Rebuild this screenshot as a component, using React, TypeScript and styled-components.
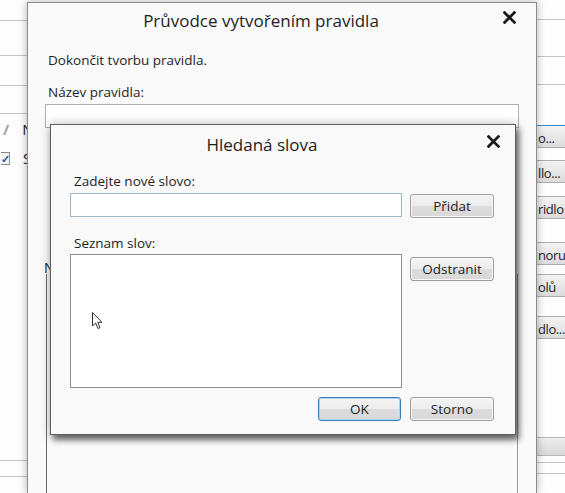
import styled, { createGlobalStyle } from "styled-components";

const Global = createGlobalStyle`
  html, body {
    margin: 0;
    padding: 0;
    background: #fdfdfd;
    overflow: hidden;
  }
  * { box-sizing: border-box; }
`;

const font = `"Open Sans", "Noto Sans", "Liberation Sans", sans-serif`;

const CloseIcon = ({ size }: { size: number }) => (
  <svg width={size} height={size} viewBox="0 0 12 12">
    <path d="M1.5 1.5 L10.5 10.5 M10.5 1.5 L1.5 10.5" stroke="#1a1a1a" strokeWidth="2.6" strokeLinecap="square" />
  </svg>
);

const Pointer = () => (
  <svg width="12" height="18" viewBox="0 0 12 18">
    <path d="M0.5 0.5 L0.5 14 L3.6 11 L6 16.5 L8 15.6 L5.7 10.3 L10 10.3 Z" fill="#fff" stroke="#333" strokeWidth="1" strokeLinejoin="round" />
  </svg>
);

const App = () => {
  return (
    <Page>
      <Global />
      <LeftStrip>
        <StripRow h={20} />
        <StripRow h={34} />
        <StripRow h={29} />
        <StripRow h={27} />
        <ToolRow h={30}>
          <Pen>/</Pen>
          <ToolText>N</ToolText>
        </ToolRow>
        <ToolRow h={28}>
          <Check>✓</Check>
          <ToolText>S</ToolText>
        </ToolRow>
        <StripRow h={288} />
        <StripRow h={15} />
      </LeftStrip>

      <OuterWindow>
        <TitleBar h={34}>
          <Title size={17}>Průvodce vytvořením pravidla</Title>
          <Close right={20} top={8}>
            <CloseIcon size={13} />
          </Close>
        </TitleBar>
        <OuterBody>
          <Label>Dokončit tvorbu pravidla.</Label>
          <Label top={16}>Název pravidla:</Label>
          <NameInput />
          <GroupBox>
            <GroupLabel>N</GroupLabel>
          </GroupBox>
        </OuterBody>
      </OuterWindow>

      <RightStrip>
        <StripRow h={19} />
        <StripRow h={36} />
        <StripRow h={27} />
        <Spacer h={40} />
        <SideButton top={0} active>o...</SideButton>
        <SideButton top={12}>llo...</SideButton>
        <SideButton top={13}>ridlo</SideButton>
        <SideButton top={23}>noru</SideButton>
        <SideButton top={9}>olů</SideButton>
        <SideButton top={19}>dlo...</SideButton>
        <Spacer h={98} />
        <SideBand />
        <StripRow h={6} />
        <StripRow h={10} />
      </RightStrip>

      <Dialog>
        <TitleBar h={38}>
          <Title size={17}>Hledaná slova</Title>
          <Close right={15} top={10}>
            <CloseIcon size={13} />
          </Close>
        </TitleBar>
        <DialogBody>
          <Label top={10} inset>Zadejte nové slovo:</Label>
          <FieldRow top={4}>
            <WordInput />
            <Button top={1}>Přidat</Button>
          </FieldRow>
          <Label top={17} inset>Seznam slov:</Label>
          <FieldRow top={3}>
            <ListBox>
              <Cursor>
                <Pointer />
              </Cursor>
            </ListBox>
            <Button top={3}>Odstranit</Button>
          </FieldRow>
          <Footer>
            <Button primary>OK</Button>
            <Button>Storno</Button>
          </Footer>
        </DialogBody>
      </Dialog>
    </Page>
  );
};

export default App;

const Page = styled.div`
  position: relative;
  width: 565px;
  height: 493px;
  display: flex;
  overflow: hidden;
  background: #fdfdfd;
  font-family: ${font};
  color: #1e1e1e;
`;

const LeftStrip = styled.div`
  width: 27px;
  flex-shrink: 0;
  display: flex;
  flex-direction: column;
`;

const RightStrip = styled.div`
  flex: 1;
  display: flex;
  flex-direction: column;
  overflow: hidden;
`;

const StripRow = styled.div<{ h: number }>`
  height: ${({ h }) => h + 1}px;
  flex-shrink: 0;
  border-bottom: 1px solid #c4c4c4;
`;

const Spacer = styled.div<{ h: number }>`
  height: ${({ h }) => h}px;
  flex-shrink: 0;
`;

const ToolRow = styled.div<{ h: number }>`
  height: ${({ h }) => h}px;
  flex-shrink: 0;
  display: flex;
  align-items: center;
  gap: 13px;
  padding-left: 1px;
  font-size: 15px;
`;

const Pen = styled.span`
  color: #a0a0a0;
  font-weight: bold;
  width: 9px;
  padding-left: 2px;
`;

const Check = styled.span`
  width: 9px;
  height: 13px;
  border: 1px solid #8a8a8a;
  border-left: none;
  background: #f4f4f4;
  color: #2a4fb0;
  font-size: 11px;
  font-weight: bold;
  display: flex;
  align-items: center;
  justify-content: center;
`;

const ToolText = styled.span`
  font-size: 15px;
  color: #222;
`;

const OuterWindow = styled.div`
  width: 510px;
  margin-top: 2px;
  flex-shrink: 0;
  background: #fafafa;
  border: 1px solid #8c8c8c;
  border-bottom: none;
  box-shadow: 0 0 8px rgba(0, 0, 0, 0.3);
  display: flex;
  flex-direction: column;
  z-index: 1;
`;

const TitleBar = styled.div<{ h: number }>`
  position: relative;
  height: ${({ h }) => h}px;
  flex-shrink: 0;
  display: flex;
  align-items: center;
  justify-content: center;
  padding-right: 42px;
`;

const Title = styled.div<{ size: number }>`
  font-size: ${({ size }) => size}px;
  color: #1e1e1e;
`;

const Close = styled.div<{ right: number; top: number }>`
  position: absolute;
  right: ${({ right }) => right}px;
  top: ${({ top }) => top}px;
  display: flex;
`;

const OuterBody = styled.div`
  flex: 1;
  padding: 15px 20px 0 20px;
  display: flex;
  flex-direction: column;
`;

const Label = styled.div<{ top?: number; inset?: boolean }>`
  font-size: 13.5px;
  line-height: 16px;
  margin-top: ${({ top = 0 }) => top}px;
  padding-left: ${({ inset }) => (inset ? 4 : 0)}px;
  color: #1e1e1e;
`;

const NameInput = styled.div`
  margin: 4px -3px 0 -3px;
  height: 24px;
  flex-shrink: 0;
  background: #fff;
  border: 1px solid #b0b0b0;
`;

const GroupBox = styled.div`
  position: relative;
  flex: 1;
  margin: 146px -2px 0 -2px;
  border-left: 1px solid #6a6a6a;
  border-right: 1px solid #9a9a9a;
`;

const GroupLabel = styled.div`
  position: absolute;
  left: -3px;
  top: -16px;
  font-size: 14px;
  color: #222;
`;

const SideButton = styled.div<{ top: number; active?: boolean }>`
  margin-top: ${({ top }) => top}px;
  height: 23px;
  flex-shrink: 0;
  display: flex;
  align-items: center;
  padding: 2px 0 0 1px;
  font-size: 13px;
  letter-spacing: -0.4px;
  color: #222;
  white-space: nowrap;
  background: linear-gradient(#f3f3f3, #dcdcdc);
  border-top: 1px solid ${({ active }) => (active ? "#3b86c8" : "#acacac")};
  border-bottom: 1px solid #acacac;
`;

const SideBand = styled.div`
  height: 19px;
  flex-shrink: 0;
  background: linear-gradient(#eeeeee, #d8d8d8);
  border-top: 1px solid #b8b8b8;
  border-bottom: 1px solid #b8b8b8;
`;

const Dialog = styled.div`
  position: absolute;
  left: 50px;
  top: 124px;
  width: 466px;
  height: 311px;
  background: #f9f9f9;
  border: 1px solid #5f5f5f;
  box-shadow: 3px 5px 6px rgba(0, 0, 0, 0.55), 0 0 10px rgba(0, 0, 0, 0.25);
  display: flex;
  flex-direction: column;
  z-index: 2;
`;

const DialogBody = styled.div`
  padding: 0 21px 0 19px;
  display: flex;
  flex-direction: column;
`;

const FieldRow = styled.div<{ top: number }>`
  display: grid;
  grid-template-columns: 332px 84px;
  column-gap: 8px;
  align-items: start;
  margin-top: ${({ top }) => top}px;
`;

const WordInput = styled.div`
  height: 24px;
  background: #fff;
  border: 1px solid #9fb6c8;
`;

const ListBox = styled.div`
  position: relative;
  height: 134px;
  background: #fff;
  border: 1px solid #8e8e8e;
`;

const Cursor = styled.div`
  position: absolute;
  left: 21px;
  top: 57px;
  display: flex;
`;

const Button = styled.div<{ primary?: boolean; top?: number }>`
  height: 24px;
  width: ${({ primary }) => (primary ? 83 : 84)}px;
  margin-top: ${({ top = 0 }) => top}px;
  display: flex;
  align-items: center;
  justify-content: center;
  font-size: 13.5px;
  color: #1e1e1e;
  border-radius: 3px;
  border: 1px solid ${({ primary }) => (primary ? "#3d7fb8" : "#9c9c9c")};
  background: linear-gradient(#f4f4f4 0%, #ececec 50%, #dcdcdc 51%, #d8d8d8 100%);
  box-shadow: inset 0 0 0 1px ${({ primary }) => (primary ? "#a9d4f2" : "#fafafa")};
`;

const Footer = styled.div`
  display: flex;
  justify-content: flex-end;
  gap: 9px;
  margin-top: 9px;
`;
